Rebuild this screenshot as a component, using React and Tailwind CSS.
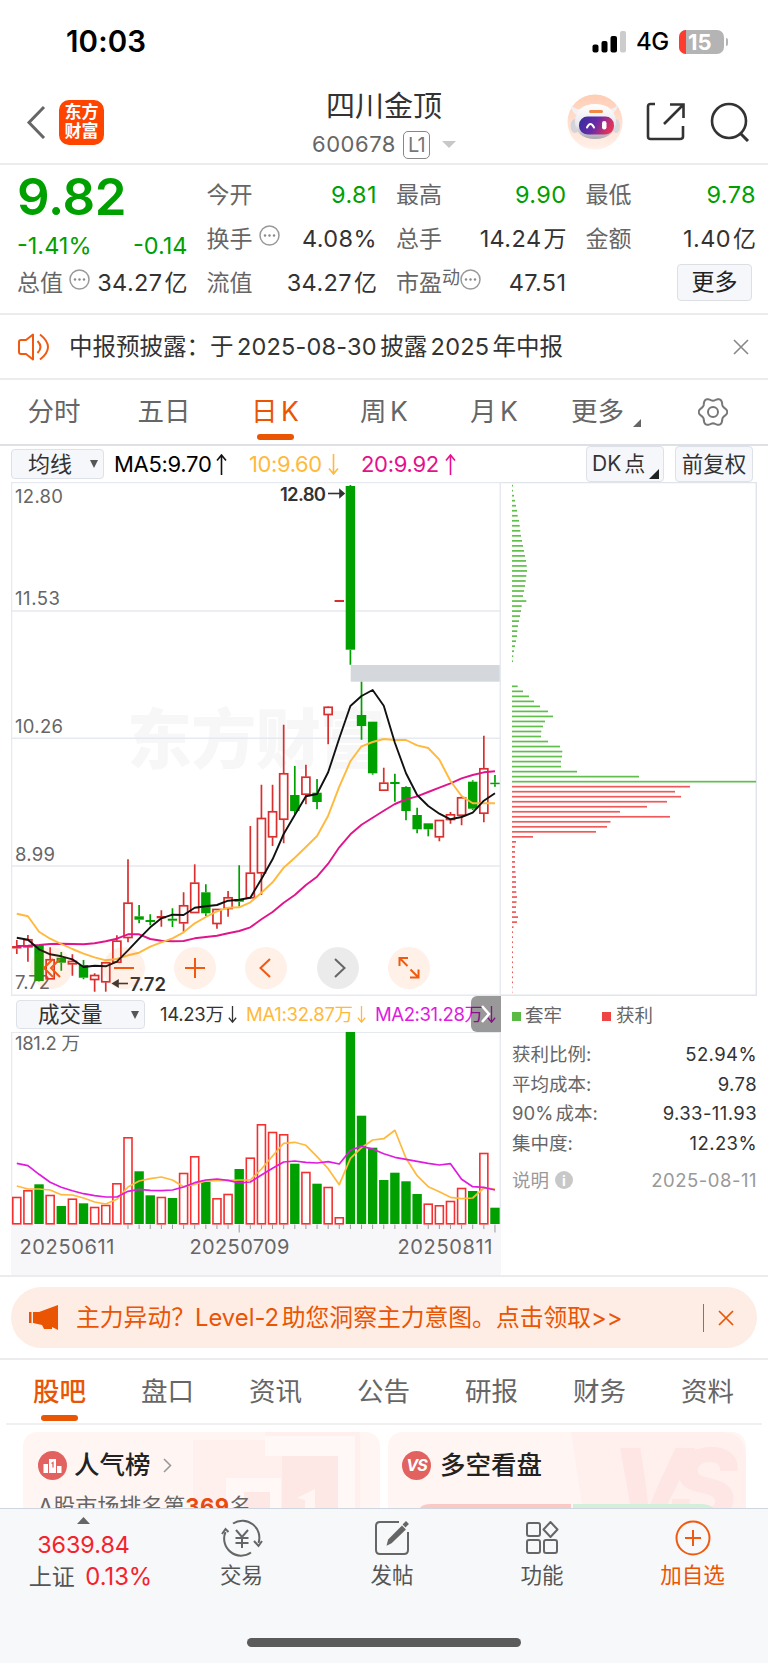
import React from "react";

const GREEN = "#00a000";
const RED = "#d9302f";

const STEP = 11.12;
const xAt = (i) => 16.8 + STEP * i;

// [up, high, bodyTop, bodyBottom, low]
const candles = [
  [1, 940, 946, 948.5, 954],
  [1, 935, 939.3, 947.3, 961.7],
  [0, 945, 945, 981, 981.5],
  [1, 947.3, 959.3, 979.3, 979.3],
  [0, 952, 957.7, 962.7, 970.7],
  [1, 954.3, 961, 964.3, 975.7],
  [0, 960, 965, 977.7, 979.3],
  [1, 973.3, 975, 980, 991.7],
  [1, 962.3, 962.3, 982.3, 991.7],
  [1, 935.3, 940.7, 962.7, 962.7],
  [1, 859.3, 902.7, 938, 942.3],
  [0, 905, 916.3, 919.7, 923.3],
  [0, 914.3, 920, 922, 925.3],
  [1, 910.3, 916, 918.3, 926.7],
  [0, 908.3, 918.7, 920.7, 927],
  [1, 892.3, 905.3, 923.3, 931.7],
  [1, 864.3, 882.7, 913, 913],
  [0, 884.3, 892.3, 913.3, 916],
  [1, 909, 909, 924, 928.7],
  [1, 891, 897.3, 909, 916.7],
  [0, 865.3, 899, 901.7, 906.7],
  [1, 826, 872.7, 898.3, 898.3],
  [1, 784.7, 818, 873.3, 895],
  [1, 784.7, 811.3, 837.3, 846],
  [1, 724.7, 773.3, 819.7, 843.3],
  [0, 766, 795, 811, 814],
  [1, 764.7, 776.7, 794.7, 804.3],
  [0, 779, 792.7, 802, 809.3],
  [1, 706.3, 706.8, 715, 744.3],
  [1, 600, 600, 602, 602],
  [0, 485, 486, 649.7, 664.7],
  [0, 681.7, 715, 726, 739.7],
  [0, 721.7, 721.7, 773.3, 774.7],
  [1, 767.7, 782.7, 790.7, 790.7],
  [0, 773.7, 782, 784, 801.7],
  [0, 786.3, 787, 811, 820.3],
  [0, 807.7, 815, 829.3, 833.3],
  [0, 823.3, 823.3, 829.3, 836.3],
  [1, 820, 820, 837.3, 841.3],
  [1, 812, 814.3, 820, 823.7],
  [1, 796.3, 797.3, 815.7, 825.3],
  [0, 780.3, 781.7, 808.7, 810],
  [1, 735.7, 768.3, 813.7, 822.3],
  [0, 775, 782.7, 784.2, 786.7],
];

const ma5 = [
  937.7, 939.7, 949.3, 954.3, 956.3, 959.3, 967, 965.7, 966.3, 961.7, 950.3,
  938.7, 927.3, 918.3, 914.7, 915, 907.7, 906.3, 905, 900.7, 899.7, 897.7, 879,
  859.3, 834, 815, 796.3, 794, 772.3, 738.3, 706, 696, 690, 705.7, 742.7, 773.3,
  795, 806, 813.7, 819.3, 817, 812.7, 800.7, 793.3,
];

const ma10 = [
  913.7, 916.3, 931.7, 938.7, 944, 949, 953.7, 957.3, 960.3, 959, 955.3, 952.7,
  946.7, 942.3, 938.3, 932.3, 923.3, 917, 911.3, 907.7, 907.3, 902.3, 892.7,
  882.3, 867.7, 857.7, 847, 836, 815.7, 786.7, 761.3, 746.3, 742, 739, 740, 740,
  745.3, 748, 759.7, 781, 796, 803.3, 803.3, 803.3,
];

const ma20 = [
  946, 945.7, 945, 944, 943.7, 944, 944.3, 943.3, 941.3, 938.7, 934.3, 934.3,
  939, 940.7, 941.3, 941, 938.3, 937, 935.7, 933.3, 931, 927.3, 919.3, 912,
  902.7, 895, 885, 876.7, 863.7, 847.3, 834.3, 824.7, 817.7, 810.7, 804, 799.3,
  796.3, 792, 787.7, 783.3, 778.3, 775, 772.3, 771.3,
];

const volumeTops = [
  1197, 1190.3, 1184.3, 1195, 1206, 1198.7, 1203.3, 1207, 1205, 1183.3, 1137.3,
  1171.3, 1195.3, 1197, 1198, 1173, 1156.3, 1181.7, 1198.3, 1194, 1169, 1157.7,
  1124.3, 1132, 1134.3, 1163.7, 1172, 1183.7, 1187, 1217.3, 1032, 1115.7,
  1147.7, 1180, 1172.7, 1181.3, 1194, 1203.7, 1205.3, 1201, 1188, 1191, 1153,
  1207.7,
];
// bars whose colour does not follow the candle above
const volumeColor = { 13: "up", 33: "down", 37: "up" };

const volMa1 = [
  1186, 1189, 1189, 1190, 1194.7, 1195, 1198, 1202, 1204, 1199.3, 1187, 1181,
  1178.7, 1177, 1180, 1186.7, 1184.3, 1181, 1180.7, 1180.3, 1180, 1180, 1169,
  1156, 1143.3, 1142.3, 1145.3, 1156.7, 1168.7, 1184.7, 1158.3, 1147.7, 1140,
  1138.7, 1130.3, 1158.3, 1175.7, 1186.7, 1191.7, 1197.3, 1198.7, 1198, 1188,
  1189,
];

const volMa2 = [
  1163.3, 1165.7, 1174.3, 1182.3, 1187.3, 1190.7, 1193.7, 1195.7, 1197, 1197,
  1191.3, 1189.3, 1190.3, 1190.7, 1190, 1187, 1182.7, 1180, 1179, 1180.3, 1183,
  1182, 1175, 1168.3, 1162, 1161, 1162.3, 1163, 1161.7, 1164, 1150.3, 1146.3,
  1149, 1153.7, 1157.3, 1159.3, 1161.3, 1163.3, 1165, 1163.7, 1179.3, 1186.7,
  1187.3, 1190,
];

const chips = [
  1, 1, 2, 3, 4, 5, 5.7, 7, 7.7, 8.3, 9, 10, 11, 12, 13, 14, 14.7, 15, 14.3,
  13.7, 13, 12, 11, 14.3, 9.7, 9, 8, 7, 6, 5.3, 5, 4, 3, 2, 1.3, 1, 0, 0, 0, 0,
  5.7, 11, 17, 22, 28, 36, 41, 33, 31, 29.3, 29, 36, 48, 50.3, 50, 49, 49, 65,
  127, 244, 178, 163, 169, 155, 135, 108, 158, 98.5, 95, 84, 21, 4, 3, 3, 3, 3,
  3, 3.5, 4, 4, 4, 4.3, 5, 4.5, 4, 4, 6, 5, 1.5, 1, 1, 1, 1, 1, 1, 1, 1, 1, 1,
  1, 0.6, 0.4,
];

const toPoints = (ys) => ys.map((y, i) => `${xAt(i)},${y}`).join(" ");

function StatusBar() {
  return (
    <div className="flex h-[80px] shrink-0 items-center justify-between pl-[66px] pr-[40px] pt-[4px]">
      <span className="text-[29.5px] font-semibold leading-none tracking-[0.1px] text-black">
        10:03
      </span>
      <div className="flex items-center">
        <svg width="35" height="22" viewBox="0 0 35 22">
          <rect x="0.5" y="13.5" width="6" height="8" rx="2" />
          <rect x="9.5" y="10" width="6" height="11.5" rx="2" />
          <rect x="18.5" y="5" width="6.5" height="16.5" rx="2" />
          <rect x="28" y="0" width="6" height="21.5" rx="2" fill="#cccccc" />
        </svg>
        <span className="ml-[9px] w-[34px] text-[24px] font-medium leading-none tracking-[-0.5px] text-black">
          4G
        </span>
        <div className="ml-[9px] flex h-[24px] w-[45px] overflow-hidden rounded-[7px] bg-[#b4b4b4]">
          <div className="w-[7px] bg-[#ff3b30]" />
          <span className="pl-[2px] text-[22px] font-bold leading-[24px] text-white">
            15
          </span>
        </div>
        <div className="ml-[2px] h-[8px] w-[2px] rounded-r-full bg-[#b4b4b4]" />
      </div>
    </div>
  );
}

function Robot() {
  return (
    <svg width="56" height="56" viewBox="0 0 56 56">
      <defs>
        <linearGradient id="halo" x1="0" y1="0" x2="0" y2="1">
          <stop offset="0" stopColor="#ffcdb4" />
          <stop offset="1" stopColor="#fff1ea" />
        </linearGradient>
        <linearGradient id="visor" x1="0" y1="0" x2="1" y2="0.3">
          <stop offset="0" stopColor="#2f2f9b" />
          <stop offset="0.55" stopColor="#6a2aa8" />
          <stop offset="1" stopColor="#e0325c" />
        </linearGradient>
        <linearGradient id="shell" x1="0" y1="0" x2="0" y2="1">
          <stop offset="0" stopColor="#ffffff" />
          <stop offset="0.6" stopColor="#e9e8ed" />
          <stop offset="1" stopColor="#a9a8b2" />
        </linearGradient>
      </defs>
      <circle cx="28" cy="28" r="27.5" fill="url(#halo)" />
      <path d="M9 21C4 17 4 13 5 11c2 4 5 4 9 4zM45 20c5-4 6-7 5-9-2 4-6 4-9 4z" fill="#f1f0f3" />
      <ellipse cx="8" cy="32" rx="4.5" ry="7" fill="#d4d3da" />
      <ellipse cx="49" cy="32" rx="4" ry="7" fill="#d9d8df" />
      <path
        d="M8 27C9 15 17 10 28 10s20 5 21 17c0 11-8 18-21 18S8 38 8 27z"
        fill="url(#shell)"
      />
      <rect x="22" y="16" width="14" height="3" rx="1.5" fill="#f08a45" />
      <rect x="12" y="22.500" width="35" height="18" rx="8.500" fill="url(#visor)" />
      <path d="M20 33.500q3.500-7 7 0" fill="none" stroke="#fff" strokeWidth="2" strokeLinecap="round" />
      <rect x="35" y="27" width="4.500" height="8.500" rx="2.200" fill="#fff" />
    </svg>
  );
}

function Header() {
  return (
    <div className="grid h-[85px] shrink-0 grid-cols-[1fr_auto_1fr] items-center border-b-2 border-[#ececee]">
      <div className="flex items-center pl-[26px]">
        <svg width="20" height="34" viewBox="0 0 20 34" fill="none" stroke="#666" strokeWidth="3">
          <path d="M18 2 3 17.5 18 33" />
        </svg>
        <div className="ml-[13px] mt-px h-[45px] w-[45px] rounded-[10px] bg-[#ff4400] pt-[3px] text-center text-[17px] font-bold leading-[19px] text-white">
          东方
          <br />
          财富
        </div>
      </div>
      <div className="flex w-[150px] flex-col items-center pt-[6px]">
        <span className="whitespace-nowrap text-[29px] leading-[40px] text-[#333]">
          四川金顶
        </span>
        <div className="flex h-[36px] items-center whitespace-nowrap">
          <span className="text-[22px] tracking-[0.5px] text-[#666]">600678</span>
          <span className="ml-[7px] flex h-[28px] w-[27px] items-center justify-center rounded-[5px] border border-[#888] text-[20px] tracking-[-1px] text-[#777]">
            L1
          </span>
          <svg className="ml-[12px]" width="14" height="7" viewBox="0 0 14 7">
            <path d="M0 0h14L7 7z" fill="#c8c8c8" />
          </svg>
        </div>
      </div>
      <div className="flex items-center justify-end pr-[17px]">
        <Robot />
        <svg className="ml-[23px]" width="40" height="40" viewBox="0 0 40 40" fill="none" stroke="#333" strokeWidth="2.6">
          <path d="M9 2H4.500Q2 2 2 4.500V34.500Q2 37 4.500 37H34Q37 37 37 34.500V24" />
          <path d="M18 22 37 3M24 2.500H37.500V16" />
        </svg>
        <svg className="ml-[24px]" width="41" height="40" viewBox="0 0 41 40" fill="none" stroke="#333" strokeWidth="2.6">
          <circle cx="19" cy="19" r="17" />
          <path d="m30 31 8 8" strokeWidth="3" />
        </svg>
      </div>
    </div>
  );
}

function Dots() {
  return (
    <svg width="21" height="21" viewBox="0 0 21 21">
      <circle cx="10.500" cy="10.500" r="9.500" fill="none" stroke="#999" strokeWidth="1.500" />
      <circle cx="6" cy="10.500" r="1.200" fill="#888" />
      <circle cx="10.500" cy="10.500" r="1.200" fill="#888" />
      <circle cx="15" cy="10.500" r="1.200" fill="#888" />
    </svg>
  );
}

function Stat({ label, value, unit, green, dots, sup }) {
  return (
    <div className="flex h-[44px] items-center justify-between whitespace-nowrap text-[23px]">
      <span className="flex items-center text-[#666]">
        {label}
        {sup && <span className="-mt-[12px] text-[18px]">{sup}</span>}
        {dots && (
          <span className={sup ? "-mt-[8px]" : "-mt-[8px] ml-[6px]"}>
            <Dots />
          </span>
        )}
      </span>
      <span className={green ? "text-[23.5px] tracking-[0.4px] text-[#00a000]" : "text-[#333]"}>
        <span className="text-[23.5px] tracking-[0.4px]">{value}</span>
        {unit && <span className="ml-[2px]">{unit}</span>}
      </span>
    </div>
  );
}

function Quote() {
  return (
    <div className="grid h-[150px] shrink-0 grid-cols-4 gap-x-[19px] border-b-2 border-[#ececee] pl-[17px] pr-[12px] pt-[7px]">
      <div>
        <div className="h-[50px] text-[51px] font-semibold leading-[50px] tracking-[-0.3px] text-[#00a000]">
          9.82
        </div>
        <div className="flex h-[45px] items-center justify-between pt-[3px] text-[23.5px] text-[#00a000]">
          <span>-1.41%</span>
          <span>-0.14</span>
        </div>
        <div className="-mt-[6px]">
          <Stat label="总值" value="34.27" unit="亿" dots />
        </div>
      </div>
      <div className="pt-px">
        <Stat label="今开" value="9.81" green />
        <Stat label="换手" value="4.08%" dots />
        <Stat label="流值" value="34.27" unit="亿" />
      </div>
      <div className="pt-px">
        <Stat label="最高" value="9.90" green />
        <Stat label="总手" value="14.24" unit="万" />
        <Stat label="市盈" sup="动" dots value="47.51" />
      </div>
      <div className="pt-px">
        <Stat label="最低" value="9.78" green />
        <Stat label="金额" value="1.40" unit="亿" />
        <div className="-mt-px flex h-[44px] items-center justify-end pr-[4px]">
          <span className="flex h-[37px] w-[75px] items-center justify-center rounded-[4px] border border-[#dcdfe4] bg-[#f6f7fa] text-[23px] text-[#222]">
            更多
          </span>
        </div>
      </div>
    </div>
  );
}

function Notice() {
  return (
    <div className="flex h-[65px] shrink-0 items-center border-b-2 border-[#ececee] pl-[18px] pr-[19px]">
      <svg width="33" height="28" viewBox="0 0 33 28" fill="none" stroke="#f05a10" strokeWidth="2">
        <path d="M15 1.500v25L8 21H3q-2 0-2-2V9q0-2 2-2h5z" strokeLinejoin="round" />
        <path d="M19.500 8q6 6 0 12M22 1.500q16 12.500 0 25" />
      </svg>
      <span className="ml-[18px] flex-1 whitespace-nowrap text-[23.5px] text-[#333] [word-spacing:-3.2px]">
        中报预披露：于 <span className="tracking-[0.2px]">2025-08-30</span> 披露{" "}
        <span className="tracking-[0.2px]">2025</span> 年中报
      </span>
      <svg width="16" height="16" viewBox="0 0 16 16" fill="none" stroke="#888" strokeWidth="1.600">
        <path d="m1 1 14 14M15 1 1 15" />
      </svg>
    </div>
  );
}

const gearPath = () => {
  const pts = [];
  for (let a = 0; a < 360; a += 5) {
    const t = (a * Math.PI) / 180;
    const r = 12.8 + 1.5 * Math.cos(6 * t);
    pts.push(`${(15 + r * Math.cos(t)).toFixed(2)} ${(15 + r * Math.sin(t)).toFixed(2)}`);
  }
  return `M${pts.join("L")}Z`;
};

function PeriodTabs() {
  return (
    <div className="flex h-[66px] shrink-0 border-b-2 border-[#dfe0e6] text-[26.5px] text-[#666]">
      {["分时", "五日", "日 K", "周 K", "月 K"].map((tab) => (
        <div
          key={tab}
          className={
            tab === "日 K"
              ? "relative flex w-[110px] items-center justify-center text-[#ea5504] [word-spacing:-4px]"
              : "flex w-[110px] items-center justify-center pr-[2px] [word-spacing:-4px]"
          }
        >
          {tab}
          {tab === "日 K" && (
            <span className="absolute bottom-[4px] h-[6px] w-[37px] rounded-full bg-[#ea5504]" />
          )}
        </div>
      ))}
      <div className="flex flex-1 items-center pl-[21px]">
        更多
        <svg className="ml-[9px] mt-[22px]" width="8" height="8" viewBox="0 0 8 8">
          <path d="M8 0v8H0z" fill="#666" />
        </svg>
      </div>
      <div className="flex w-[70px] items-center">
        <svg width="30" height="30" viewBox="0 0 30 30" fill="none" stroke="#777" strokeWidth="2">
          <path d={gearPath()} />
          <circle cx="15" cy="15" r="5" />
        </svg>
      </div>
    </div>
  );
}

function Arrow({ up, color, className }) {
  return (
    <svg className={className} width="11" height="21" viewBox="0 0 11 21" fill="none" stroke={color} strokeWidth="1.600">
      <path d={up ? "M5.500 21V1M1 6.500 5.500 1 10 6.500" : "M5.500 0v20M1 14.500 5.500 20 10 14.500"} />
    </svg>
  );
}

function IndicatorRow() {
  return (
    <div className="flex h-[36px] shrink-0 items-center whitespace-nowrap pl-[11px] pr-[15px] text-[22px]">
      <div className="flex h-[30px] w-[93px] items-center justify-between rounded-[4px] border border-[#dfe1e8] bg-[#f6f7fa] pl-[16px] pr-[5px] text-[#333]">
        均线
        <svg width="8" height="8" viewBox="0 0 8 8">
          <path d="M0 0h8L4 8z" fill="#555" />
        </svg>
      </div>
      <div className="ml-[10px] flex w-[135px] items-center text-[22px] tracking-[-0.3px] text-black">
        MA5:9.70
        <Arrow up color="#111" className="ml-[5px]" />
      </div>
      <div className="flex w-[112px] items-center text-[22px] tracking-[-0.4px] text-[#ffb93c]">
        10:9.60
        <Arrow color="#ffb93c" className="ml-[6px]" />
      </div>
      <div className="flex flex-1 items-center text-[22px] tracking-[-0.3px] text-[#e5108c]">
        20:9.92
        <Arrow up color="#e5108c" className="ml-[6px]" />
      </div>
      <div className="flex h-[36px] w-[78px] items-center justify-between rounded-[4px] border border-[#dfe1e8] bg-[#f6f7fa] pl-[5px] pr-[4px] text-[#333]">
        <span className="text-[21px] [word-spacing:-3px]">DK 点</span>
        <svg className="-ml-[2px] mt-[20px]" width="10" height="10" viewBox="0 0 10 10">
          <path d="M10 0v10H0z" fill="#222" />
        </svg>
      </div>
      <div className="ml-[11px] flex h-[36px] w-[78px] items-center justify-center rounded-[4px] border border-[#dfe1e8] bg-[#f6f7fa] text-[21.5px] text-[#333]">
        前复权
      </div>
    </div>
  );
}

function Candle({ i, data }) {
  const [up, high, top, bottom, low] = data;
  const x = xAt(i);
  const color = up ? RED : GREEN;
  const hollow = up && bottom - top > 3.2;
  return (
    <g stroke={color} strokeWidth="1.700">
      <path d={`M${x} ${high}V${top}M${x} ${bottom}V${low}`} />
      {hollow ? (
        <rect x={x - 4} y={top + 0.5} width="8" height={bottom - top - 1} fill="none" />
      ) : (
        <rect x={x - 4.7} y={top} width="9.400" height={bottom - top} fill={color} stroke="none" />
      )}
    </g>
  );
}

const tools = [
  { bg: "bg-[#ff6a1a]/10", d: "M23 12 14 21l9 9M30 12l-9 9 9 9", left: "ml-[19px]" },
  { bg: "bg-[#ff6a1a]/10", d: "M11 21h20", left: "ml-[31px]" },
  { bg: "bg-[#ff6a1a]/10", d: "M11 21h20M21 11v20", left: "ml-[29px]" },
  { bg: "bg-[#ff6a1a]/10", d: "m25 12-9.500 9 9.500 9", left: "ml-[29px]" },
  { bg: "bg-black/8", d: "m18 12 9.500 9-9.500 9", left: "ml-[30px]", gray: true },
  {
    bg: "bg-[#ff6a1a]/10",
    d: "M11.500 19v-8H20M12 11.500l7.500 7.500M30.500 22.500v8H22M30 30l-7.500-7.500",
    left: "ml-[29px]",
  },
];

function PriceChart() {
  return (
    <div className="relative h-[514px]">
      <svg className="block" width="490" height="514" viewBox="11 482 490 514">
        <text x="127" y="763" fontSize="65" fontWeight="900" fill="#f7f7f8" textLength="258">
          东方财富
        </text>
        <g stroke="#e6e9f0" strokeWidth="1.500">
          <path d="M11.500 482v514M500.300 482v514M11 482.500h490M11 995.300h490" />
          <path d="M11 611h490M11 738.300h490M11 866h490" />
        </g>
        <g fill="#666" fontSize="18.500">
          <text x="15" y="502.500" textLength="48">12.80</text>
          <text x="15" y="605" textLength="45">11.53</text>
          <text x="15" y="733" textLength="48">10.26</text>
          <text x="15" y="860.500" textLength="40">8.99</text>
          <text x="15" y="989" textLength="35">7.72</text>
        </g>
        <rect x="350.700" y="665" width="149" height="16.700" fill="#d4d7dc" />
        {candles.map((c, i) => (
          <Candle key={i} i={i} data={c} />
        ))}
        <g fill="none" strokeWidth="1.900" strokeLinejoin="round">
          <polyline points={toPoints(ma20)} stroke="#e0158c" />
          <polyline points={toPoints(ma10)} stroke="#ffb93c" />
          <polyline points={toPoints(ma5)} stroke="#111" />
        </g>
        <g fill="#333" fontSize="18.500" fontWeight="600">
          <text x="280" y="500.500" textLength="46">12.80</text>
          <text x="130" y="990.500" textLength="36">7.72</text>
        </g>
        <g stroke="#333" strokeWidth="1.600" fill="#333">
          <path d="M328 493.500h12" />
          <path d="m340 490 4 3.500-4 3.500z" />
          <path d="M117 983.500h11" />
          <path d="m118 980.500-5 3 5 3z" />
        </g>
      </svg>
      <div className="absolute bottom-[7px] left-0 flex">
        {tools.map((tool) => (
          <div key={tool.d} className={`${tool.left} ${tool.bg} h-[42px] w-[42px] rounded-full`}>
            <svg
              width="42"
              height="42"
              viewBox="0 0 42 42"
              fill="none"
              stroke={tool.gray ? "#666" : "#f05a10"}
              strokeWidth="2"
            >
              <path d={tool.d} />
            </svg>
          </div>
        ))}
      </div>
    </div>
  );
}

function VolumeChart() {
  return (
    <svg className="block" width="490" height="243" viewBox="11 1032 490 243">
      <rect x="11" y="1224" width="490" height="51" fill="#f7f7fa" />
      <path d="M11 1032.300h490M11.500 1032v192M500.300 1032v192" stroke="#e6e9f0" strokeWidth="1.500" />
      <text x="15" y="1050" fontSize="18.500" fill="#666" textLength="65">
        181.2 万
      </text>
      {volumeTops.map((top, i) => {
        const up = volumeColor[i] ? volumeColor[i] === "up" : candles[i][0];
        return up ? (
          <rect
            key={i}
            x={xAt(i) - 4}
            y={top + 0.5}
            width="8"
            height={1223.3 - top}
            fill="#fff"
            stroke="#f53030"
            strokeWidth="1.600"
          />
        ) : (
          <rect key={i} x={xAt(i) - 4.7} y={top} width="9.400" height={1224 - top} fill={GREEN} />
        );
      })}
      <g fill="none" strokeWidth="1.700" strokeLinejoin="round">
        <polyline points={toPoints(volMa1)} stroke="#ffb93c" />
        <polyline points={toPoints(volMa2)} stroke="#e01be0" />
      </g>
      <g stroke="#999" strokeWidth="1">
        {volumeTops.map(
          (_, i) =>
            i > 9 && (
              <path key={i} d={`M${xAt(i)} 1224.500V${i === 20 || i === 43 ? 1232.5 : 1229}`} />
            )
        )}
      </g>
      <g fill="#666" fontSize="20">
        <text x="19.500" y="1253.500" textLength="95">20250611</text>
        <text x="189.500" y="1253.500" textLength="100">20250709</text>
        <text x="397.500" y="1253.500" textLength="95">20250811</text>
      </g>
    </svg>
  );
}

function VolumeHeader() {
  return (
    <div className="relative flex h-[36px] items-center overflow-hidden whitespace-nowrap pl-[5px] pt-px text-[18.5px]">
      <div className="flex h-[29px] w-[129px] items-center justify-between rounded-[4px] border border-[#dfe1e8] bg-[#f6f7fa] pl-[21px] pr-[5px] text-[21.5px] text-[#333]">
        成交量
        <svg width="8" height="8" viewBox="0 0 8 8">
          <path d="M0 0h8L4 8z" fill="#555" />
        </svg>
      </div>
      <div className="ml-[15px] flex w-[86px] items-center tracking-[-0.3px] text-[#333]">
        14.23万
        <Arrow color="#333" className="ml-[4px] h-[17px] w-[9px]" />
      </div>
      <div className="flex w-[129px] items-center tracking-[-0.3px] text-[#ffb93c]">
        MA1:32.87万
        <Arrow color="#ffb93c" className="ml-[4px] h-[17px] w-[9px]" />
      </div>
      <div className="flex items-center tracking-[-0.4px] text-[#e01be0]">
        MA2:31.28万
        <Arrow color="#e01be0" className="ml-[4px] h-[17px] w-[9px]" />
      </div>
      <div className="absolute right-0 top-0 flex h-[36px] w-[30px] items-center justify-center rounded-l-[6px] bg-black/40">
        <svg width="10" height="18" viewBox="0 0 10 18" fill="none" stroke="#fff" strokeWidth="2.500">
          <path d="m1 1 7 8-7 8" />
        </svg>
      </div>
    </div>
  );
}

function ChipPanel() {
  const rows = [
    ["获利比例:", "52.94%"],
    ["平均成本:", "9.78"],
    ["90% 成本:", "9.33-11.93"],
    ["集中度:", "12.23%"],
  ];
  return (
    <div className="w-[256px]">
      <svg className="block" width="256" height="514" viewBox="501 482 256 514">
        <path d="M501 482.500h255.300V995.300H501" fill="none" stroke="#e2e4ec" strokeWidth="1.500" />
        {chips.map((len, i) => (
          <rect
            key={i}
            x="512"
            y={484.8 + i * 5.017}
            width={len}
            height="1.700"
            fill={i < 60 ? "#5fbf4a" : "#ee5a5a"}
          />
        ))}
      </svg>
      <div className="pl-[11px] text-[18.5px] text-[#666]">
        <div className="flex h-[40px] items-center">
          <span className="mr-[4px] h-[9px] w-[9px] bg-[#5bb946]" />
          套牢
          <span className="ml-[40px] mr-[5px] h-[9px] w-[9px] bg-[#ee4444]" />
          获利
        </div>
        <div className="pt-[4px]">
          {rows.map(([label, value]) => (
            <div key={label} className="flex h-[29.6px] items-center justify-between">
              <span className="[word-spacing:-3px]">{label}</span>
              <span className="tracking-[0.4px] text-[#333]">{value}</span>
            </div>
          ))}
        </div>
        <div className="mt-[5px] flex h-[34px] items-center text-[#999]">
          说明
          <span className="ml-[6px] flex h-[18px] w-[18px] items-center justify-center rounded-full bg-[#c8c8c8] text-[14px] font-bold text-white">
            i
          </span>
          <span className="ml-auto tracking-[0.5px]">2025-08-11</span>
        </div>
      </div>
    </div>
  );
}

function Banner() {
  return (
    <div className="h-[85px] shrink-0 border-b-2 border-t-2 border-[#ececee] px-[11px] pt-[10px]">
      <div className="flex h-[61px] items-center rounded-full bg-[#feede4] pl-[18px] pr-[23px] text-[#ea5504]">
        <svg width="29" height="25" viewBox="0 0 29 25" fill="#ea5504">
          <path d="M0 7h2.500v11H0zM4 7h6L29 0v25l-6-3v2h-8l-2-4-9-2z" />
        </svg>
        <span className="ml-[18px] flex-1 whitespace-nowrap text-[23.8px] [word-spacing:-4px]">
          主力异动？Level-2 助您洞察主力意图。点击领取&gt;&gt;
        </span>
        <span className="h-[28px] w-px bg-[#ea5504]" />
        <svg className="ml-[14px]" width="16" height="16" viewBox="0 0 16 16" fill="none" stroke="#ea5504" strokeWidth="1.700">
          <path d="m1 1 14 14M15 1 1 15" />
        </svg>
      </div>
    </div>
  );
}

function SectionTabs() {
  return (
    <div className="mx-[6px] flex h-[65px] shrink-0 border-b-2 border-[#f0f0f0] text-[26.5px] text-[#666]">
      {["股吧", "盘口", "资讯", "公告", "研报", "财务", "资料"].map((tab) => (
        <div
          key={tab}
          className={
            tab === "股吧"
              ? "relative flex w-[108px] items-center justify-center pr-px font-medium text-[#ea5504]"
              : "flex w-[108px] items-center justify-center pr-px"
          }
        >
          {tab}
          {tab === "股吧" && (
            <span className="absolute bottom-[2px] h-[6px] w-[37px] rounded-full bg-[#ea5504]" />
          )}
        </div>
      ))}
    </div>
  );
}

function Cards() {
  return (
    <div className="flex h-[83px] shrink-0 gap-[8px] overflow-hidden pl-[23px] pr-[22px] pt-[7px]">
      <div className="relative h-[160px] w-[357px] overflow-hidden rounded-[14px] bg-[#fff6f4]">
        <svg className="absolute left-0 top-0" width="357" height="80" viewBox="0 0 357 80">
          <path d="M170 8h72v-8h95v80H170z" fill="#fff0ee" />
          <path d="M203 46h55V80h-55zM242 4h90v76h-30V24h-60z" fill="#fff8f7" />
          <path d="M259 24h56v56h-56zM221 60h26v20h-26z" fill="#fde8e6" />
          <path d="m274 66 18-9v23h-10V68z" fill="#fff6f4" />
        </svg>
        <div className="relative pl-[15px] pt-[12px]">
          <div className="flex h-[42px] items-center">
            <svg width="29" height="29" viewBox="0 0 29 29">
              <circle cx="14.500" cy="14.500" r="14.500" fill="#e2625f" />
              <path d="M5.500 13h4.500v9H5.500zM11 8h7v14h-7zM19 15h4.500v7H19z" fill="#fff" />
              <path d="M13.500 12.500 15 11.500v5" stroke="#e2625f" strokeWidth="1.300" fill="none" />
            </svg>
            <span className="ml-[7px] text-[25.5px] font-medium text-[#222]">人气榜</span>
            <svg className="ml-[12px]" width="9" height="15" viewBox="0 0 9 15" fill="none" stroke="#999" strokeWidth="1.600">
              <path d="m1 1 6.500 6.500L1 14" />
            </svg>
          </div>
          <div className="mt-[4px] whitespace-nowrap text-[22px] leading-[32px] text-[#666]">
            A股市场排名第<span className="font-bold tracking-[0.5px] text-[#ea4a10]">369</span>名
          </div>
        </div>
      </div>
      <div className="relative h-[160px] w-[358px] overflow-hidden rounded-[14px] bg-[#fff6f4]">
        <svg className="absolute left-0 top-0" width="358" height="80" viewBox="0 0 358 80">
          <path d="M183 0h150q25 0 25 26v54H195z" fill="#fff0ee" />
          <text x="222" y="92" fontSize="104" fontWeight="800" fontStyle="italic" fill="#fde6e4" textLength="128">
            VS
          </text>
          <path d="M31 80q0-8 12-8h140v8z" fill="#fac9c6" />
          <path d="M185 72h128q12 0 15 8H185z" fill="#d3efdc" />
        </svg>
        <div className="relative flex h-[66px] items-center pl-[14px]">
          <span className="flex h-[29px] w-[29px] items-center justify-center rounded-full bg-[#e2625f] text-[16px] font-bold italic tracking-[-1px] text-white">
            VS
          </span>
          <span className="ml-[9px] text-[25.5px] font-medium text-[#222]">多空看盘</span>
        </div>
      </div>
    </div>
  );
}

function BottomBar() {
  return (
    <div className="h-[157px] shrink-0 border-t border-[#cfd6e0] bg-[#f7f8fa]">
      <div className="flex h-[92px] pl-[15px] text-[21.5px] text-[#555]">
        <div className="flex w-[151px] flex-col items-center pt-[8px]">
          <svg className="-ml-[14px]" width="13" height="7" viewBox="0 0 13 7">
            <path d="M0 7h13L6.500 0z" fill="#666" />
          </svg>
          <span className="-ml-[14px] mt-[5px] text-[23.3px] leading-[31px] text-[#f5222d]">
            3639.84
          </span>
          <span className="whitespace-nowrap text-[23px] leading-[34px]">
            上证 <span className="ml-[4px] text-[23.8px] text-[#f5222d]">0.13%</span>
          </span>
        </div>
        <div className="flex w-[151px] flex-col items-center pt-[10px]">
          <svg width="42" height="38" viewBox="0 0 42 38" fill="none" stroke="#666" strokeWidth="2">
            <path d="M12 4.500A17 17 0 0 1 37.500 24M30 33.500A17 17 0 0 1 4.500 13" />
            <path d="m33 22 4.500 5 3.500-5M1 15l3.500-5 3 3" />
            <path d="m15 11 6 7 6-7M21 18v11M14.500 19h13M14.500 24h13" />
          </svg>
          <span className="mt-[2px] leading-[32px]">交易</span>
        </div>
        <div className="flex w-[150px] flex-col items-center pt-[10px]">
          <svg width="36" height="38" viewBox="0 0 36 38" fill="none" stroke="#666" strokeWidth="2">
            <path d="M25 3H6Q2 3 2 7v24q0 4 4 4h24q4 0 4-4V13" />
            <path d="m14 25 1-4L28 8l2.500 2.500L17 23.500zM30 5.500l2-2 1.500 1.500-2 2z" fill="#666" />
          </svg>
          <span className="mt-[2px] leading-[32px]">发帖</span>
        </div>
        <div className="flex w-[150px] flex-col items-center pt-[10px]">
          <svg width="34" height="38" viewBox="0 0 34 38" fill="none" stroke="#666" strokeWidth="2">
            <rect x="2" y="4" width="13" height="13" rx="2" />
            <rect x="2" y="21" width="13" height="13" rx="2" />
            <rect x="19" y="21" width="13" height="13" rx="2" />
            <path d="m25.500 3 7 7.500-7 7.500-7-7.500z" strokeLinejoin="round" />
          </svg>
          <span className="mt-[2px] leading-[32px]">功能</span>
        </div>
        <div className="flex w-[151px] flex-col items-center pt-[10px] text-[#ea5504]">
          <svg width="38" height="38" viewBox="0 0 38 38" fill="none" stroke="#f05a10" strokeWidth="2">
            <circle cx="19" cy="19" r="16.500" />
            <path d="M11 19h16M19 11v16" />
          </svg>
          <span className="mt-[2px] leading-[32px]">加自选</span>
        </div>
      </div>
      <div className="mx-auto mt-[37px] h-[9px] w-[274px] rounded-full bg-[#5b5b5b]" />
    </div>
  );
}

function App() {
  return (
    <div className="flex h-[1663px] w-[768px] flex-col overflow-hidden bg-white font-['Inter','Noto_Sans_CJK_SC',sans-serif]">
      <StatusBar />
      <Header />
      <Quote />
      <Notice />
      <PeriodTabs />
      <IndicatorRow />
      <div className="flex h-[793px] shrink-0 pl-[11px]">
        <div className="w-[490px]">
          <PriceChart />
          <VolumeHeader />
          <VolumeChart />
        </div>
        <ChipPanel />
      </div>
      <Banner />
      <SectionTabs />
      <Cards />
      <BottomBar />
    </div>
  );
}

export default App;
